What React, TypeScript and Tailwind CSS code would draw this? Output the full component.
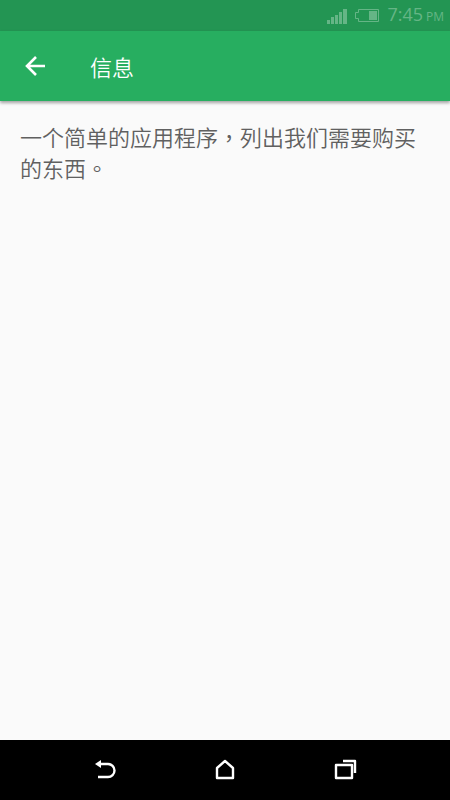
import { ReactNode } from "react";

function StatusBar() {
  return (
    <div className="flex h-[31px] items-center justify-end bg-[#239553] pr-1.5 text-[#65b586]">
      <svg className="mr-2 h-4 w-5" viewBox="0 0 20 16" fill="currentColor" aria-hidden="true">
        <rect x="0" y="12" width="3" height="4" />
        <rect x="4" y="9" width="3" height="7" />
        <rect x="8" y="7" width="3" height="9" />
        <rect x="12" y="4" width="3" height="12" />
        <rect x="16" y="1" width="4" height="15" />
      </svg>
      <svg className="mr-2 h-3.5 w-6" viewBox="0 0 24 14" aria-hidden="true">
        <path d="M3.5 .5h20v12h-20v-3h-3v-6h3z" fill="none" stroke="currentColor" />
        <rect x="14" y="2" width="8" height="9" fill="currentColor" />
      </svg>
      <div className="flex items-baseline gap-[3px] font-['Open_Sans',sans-serif] font-normal">
        <span className="text-[18px] leading-7">7:45</span>
        <span className="text-[12px] leading-7">PM</span>
      </div>
    </div>
  );
}

function AppBar({ title }: { title: string }) {
  return (
    <header className="flex h-[70px] items-center bg-[#27ae60] pl-[22px] text-white shadow-[0_2px_3px_rgba(0,0,0,0.35)]">
      <button type="button" aria-label="返回" className="mr-[42px]">
        <svg className="size-[26px]" viewBox="0 0 26 26" fill="none" stroke="currentColor" strokeWidth="2.6" aria-hidden="true">
          <path d="M23 13H5M14 4l-9 9 9 9" />
        </svg>
      </button>
      <h1 className="text-[22px] leading-8">{title}</h1>
    </header>
  );
}

function NavButton({ label, children }: { label: string; children: ReactNode }) {
  return (
    <button type="button" aria-label={label} className="flex h-full w-[120px] items-center justify-center">
      <svg
        className="size-6"
        viewBox="0 0 24 24"
        fill="none"
        stroke="currentColor"
        strokeWidth="2.4"
        strokeLinejoin="round"
        aria-hidden="true"
      >
        {children}
      </svg>
    </button>
  );
}

export default function App() {
  return (
    <div className="flex min-h-screen flex-col bg-[#fafafa] font-['Noto_Sans_CJK_TC',sans-serif] font-[350]">
      <StatusBar />
      <AppBar title="信息" />

      <main className="flex-1 px-5 pt-5">
        <p className="text-[22px] leading-[31px] text-[#606060]">
          一个简单的应用程序，列出我们需要购买的东西。
        </p>
      </main>

      <nav className="flex h-[60px] items-center justify-center bg-black text-white">
        <NavButton label="后退">
          <path d="M6 6h9a6.5 6.5 0 0 1 0 13H5" />
          <path d="M2 6l6-4v8z" fill="currentColor" stroke="none" />
        </NavButton>
        <NavButton label="主屏幕">
          <path d="M4 10l8-7 8 7v10H4z" />
        </NavButton>
        <NavButton label="最近的应用">
          <path d="M3 7h16v13H3zM10 3h12v12" />
        </NavButton>
      </nav>
    </div>
  );
}
